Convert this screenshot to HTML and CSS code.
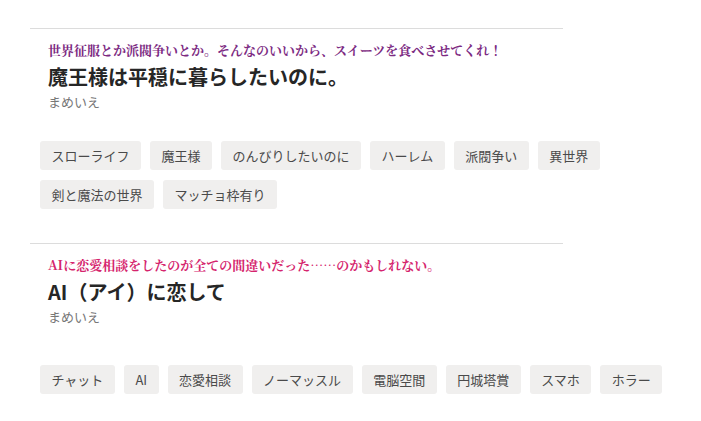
FILE: index.html
```html
<!DOCTYPE html>
<html lang="ja">
<head>
<meta charset="utf-8">
<link rel="stylesheet" href="styles.css">
</head>
<body>
<div class="list">
  <section class="item">
    <div class="rule"></div>
    <div class="head">
      <p class="catch catch-purple">世界征服とか派閥争いとか。そんなのいいから、スイーツを食べさせてくれ！</p>
      <h2 class="title">魔王様は平穏に暮らしたいのに。</h2>
      <p class="author">まめいえ</p>
    </div>
    <ul class="tags">
      <li class="tag">スローライフ</li>
      <li class="tag">魔王様</li>
      <li class="tag">のんびりしたいのに</li>
      <li class="tag">ハーレム</li>
      <li class="tag">派閥争い</li>
      <li class="tag">異世界</li>
      <li class="tag">剣と魔法の世界</li>
      <li class="tag">マッチョ枠有り</li>
    </ul>
  </section>
  <section class="item">
    <div class="rule"></div>
    <div class="head">
      <p class="catch catch-pink">AIに恋愛相談をしたのが全ての間違いだった……のかもしれない。</p>
      <h2 class="title">AI（アイ）に恋して</h2>
      <p class="author">まめいえ</p>
    </div>
    <ul class="tags tags-far">
      <li class="tag">チャット</li>
      <li class="tag">AI</li>
      <li class="tag">恋愛相談</li>
      <li class="tag">ノーマッスル</li>
      <li class="tag">電脳空間</li>
      <li class="tag">円城塔賞</li>
      <li class="tag">スマホ</li>
      <li class="tag">ホラー</li>
    </ul>
  </section>
</div>
</body>
</html>
```
FILE: styles.css
```css
html, body {
  margin: 0;
  padding: 0;
  background: #ffffff;
}
body {
  font-family: "Noto Sans CJK JP", "Noto Sans", sans-serif;
  color: #333;
}
.list {
  padding: 28px 0 0 30px;
}
.item {
  margin-bottom: 34px;
}
.rule {
  width: 533px;
  border-top: 1px solid #dcdcdc;
}
.head {
  padding-left: 18px;
}
.catch {
  margin: 12px 0 0;
  font-size: 13px;
  line-height: 18px;
  font-weight: 700;
  font-family: "Noto Serif CJK JP", "Noto Sans CJK JP", serif;
}
.catch-purple {
  color: #7c2a82;
}
.catch-pink {
  color: #d5246d;
}
.title {
  margin: 4px 0 0;
  font-size: 20px;
  line-height: 28px;
  font-weight: 700;
  color: #262626;
}
.author {
  margin: 2px 0 0;
  font-size: 13px;
  line-height: 18px;
  color: #777;
}
.tags {
  list-style: none;
  margin: 30px 0 0;
  padding: 0 0 0 10px;
  display: flex;
  flex-wrap: wrap;
  gap: 10px 9px;
}
.tags-far {
  margin-top: 39px;
}
.tag {
  background: #f0efee;
  border-radius: 3px;
  padding: 0 11.5px;
  font-size: 13px;
  line-height: 29px;
  color: #4a4a4a;
}
```
